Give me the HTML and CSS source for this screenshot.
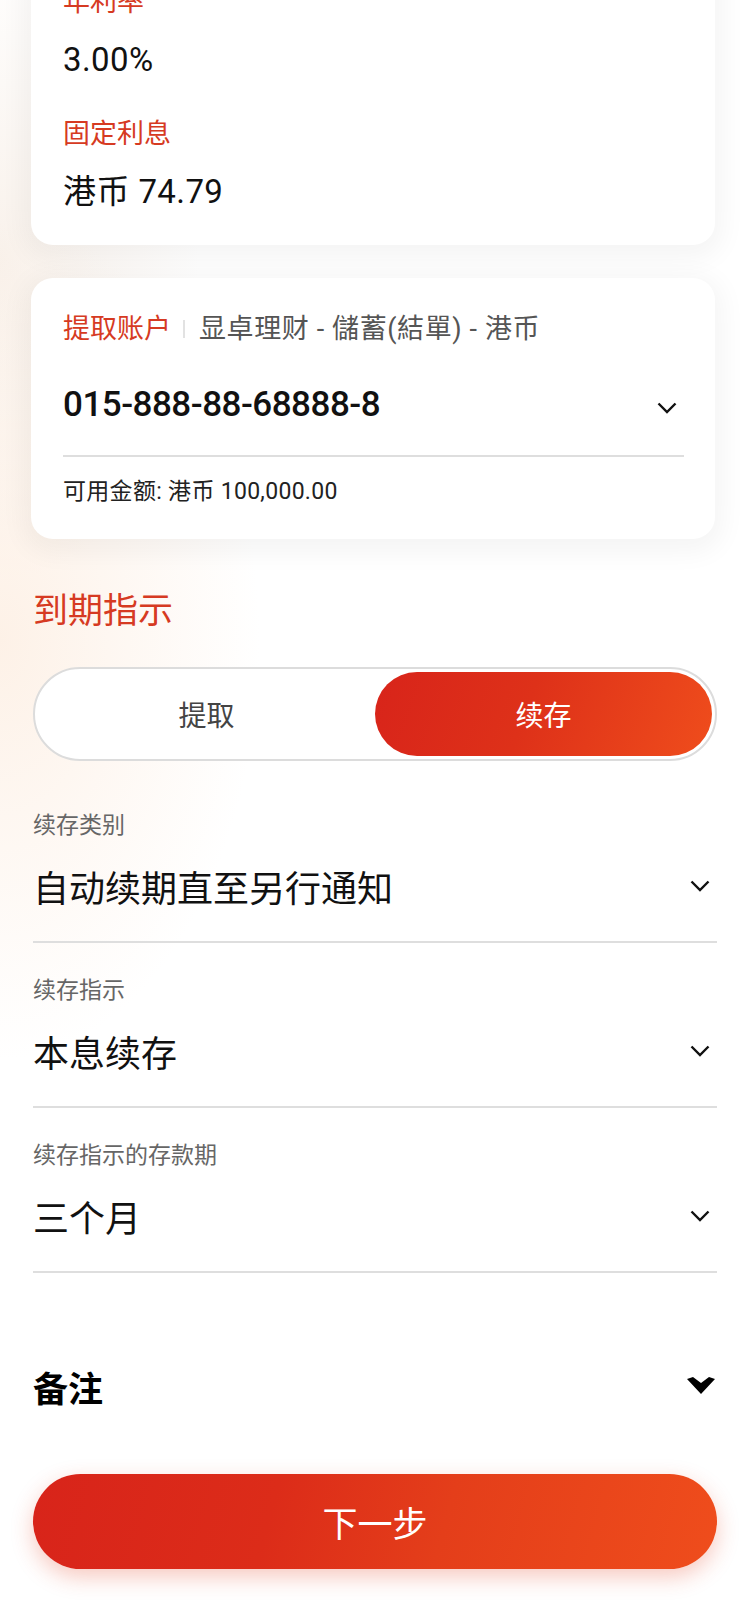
FILE: index.html
```html
<!DOCTYPE html>
<html lang="zh-CN">
<head>
    <meta charset="UTF-8">
    <title>定期存款</title>
    <link rel="stylesheet" href="styles.css">
</head>
<body>
<div class="page">
    <div class="card card-rate">
        <p class="card-label">年利率</p>
        <p class="card-value">3.00%</p>
        <p class="card-label">固定利息</p>
        <p class="card-value">港币 74.79</p>
    </div>

    <div class="card card-account">
        <p class="account-head">
            <span class="account-title">提取账户</span>
            <span class="account-sep"></span>
            <span class="account-name">显卓理财 - 儲蓄(結單) - 港币</span>
        </p>
        <div class="account-row">
            <span class="account-no">015-888-88-68888-8</span>
            <svg class="chev" width="20" height="12" viewBox="0 0 20 12"><polyline points="1.5,1.5 10,10 18.5,1.5" fill="none" stroke="#111" stroke-width="2.4"/></svg>
        </div>
        <p class="account-balance">可用金额: 港币 100,000.00</p>
    </div>

    <div class="form">
        <h2 class="section-title">到期指示</h2>
        <div class="toggle">
            <div class="toggle-item">提取</div>
            <div class="toggle-item active">续存</div>
        </div>

        <div class="field">
            <p class="field-label">续存类别</p>
            <div class="field-row">
                <span class="field-value">自动续期直至另行通知</span>
                <svg class="chev" width="20" height="12" viewBox="0 0 20 12"><polyline points="1.5,1.5 10,10 18.5,1.5" fill="none" stroke="#111" stroke-width="2.4"/></svg>
            </div>
        </div>
        <div class="field">
            <p class="field-label">续存指示</p>
            <div class="field-row">
                <span class="field-value">本息续存</span>
                <svg class="chev" width="20" height="12" viewBox="0 0 20 12"><polyline points="1.5,1.5 10,10 18.5,1.5" fill="none" stroke="#111" stroke-width="2.4"/></svg>
            </div>
        </div>
        <div class="field">
            <p class="field-label">续存指示的存款期</p>
            <div class="field-row">
                <span class="field-value">三个月</span>
                <svg class="chev" width="20" height="12" viewBox="0 0 20 12"><polyline points="1.5,1.5 10,10 18.5,1.5" fill="none" stroke="#111" stroke-width="2.4"/></svg>
            </div>
        </div>

        <div class="remark">
            <span class="remark-title">备注</span>
            <svg class="chev-bold" width="30" height="18" viewBox="0 0 30 18"><path d="M1 2 L7 0 L15 6 L23 0 L29 2 L15 17 Z" fill="#000"/></svg>
        </div>

        <button class="next">下一步</button>
    </div>
</div>
</body>
</html>
```

FILE: styles.css
```css
body{
    margin: 0px;
    background-color: #fff;
    font-family: Roboto, "Noto Sans CJK SC", sans-serif;
    color: #111;
}
p{
    margin: 0px;
}
.page{
    width: 750px;
    height: 1624px;
    overflow: hidden;
    background:
        radial-gradient(ellipse 260px 420px at 0px 640px, rgba(252, 232, 215, 0.6), rgba(255, 255, 255, 0)),
        radial-gradient(ellipse 200px 320px at 0px 260px, rgba(247, 238, 230, 0.8), rgba(255, 255, 255, 0)),
        #fff;
}
.card{
    margin: 0px 35px 0px 31px;
    background-color: #fff;
    border-radius: 22px;
    box-shadow: 0px 6px 26px 8px rgba(0, 0, 0, 0.045);
    position: relative;
}
.card-rate{
    margin-top: -60px;
    padding: 44px 32px 31px 32px;
}
.card-label{
    font-size: 27px;
    line-height: 36px;
    color: #d63a22;
}
.card-value{
    margin-top: 18px;
    font-size: 33px;
    line-height: 44px;
    color: #111;
    letter-spacing: 0.4px;
}
.card-value + .card-label{
    margin-top: 34px;
}
.card-account{
    margin-top: 33px;
    padding: 33px 31px 32px 32px;
}
.account-head{
    display: flex;
    align-items: center;
    font-size: 27px;
    line-height: 36px;
}
.account-title{
    color: #d63a22;
}
.account-sep{
    width: 2px;
    height: 18px;
    background-color: #e2e2e2;
    margin: 0px 14px 0px 12px;
}
.account-name{
    color: #555;
    letter-spacing: 0.6px;
}
.account-row{
    margin-top: 33px;
    display: flex;
    align-items: center;
    justify-content: space-between;
    height: 48px;
    padding-bottom: 27px;
    border-bottom: 2px solid #dedede;
}
.account-no{
    font-size: 35px;
    font-weight: 500;
    letter-spacing: -0.5px;
}
.chev{
    margin-right: 7px;
}
.account-row .chev{
    margin-top: 8px;
}
.account-balance{
    margin-top: 20px;
    font-size: 23px;
    line-height: 30px;
    color: #222;
    letter-spacing: 0.3px;
}
.form{
    padding: 0px 33px;
}
.section-title{
    margin: 50px 0px 0px 0px;
    font-size: 35px;
    line-height: 46px;
    font-weight: 400;
    color: #d63a22;
}
.toggle{
    margin-top: 32px;
    height: 84px;
    padding: 3px;
    border: 2px solid #dcdcdc;
    border-radius: 48px;
    background-color: #fff;
    display: flex;
    margin-bottom: 17px;
}
.toggle-item{
    flex: 1;
    display: flex;
    align-items: center;
    justify-content: center;
    font-size: 28px;
    color: #444;
    border-radius: 42px;
}
.toggle-item.active{
    color: #fff;
    background: linear-gradient(110deg, #d8241a 0%, #de3119 45%, #ef4d1c 100%);
}
.field{
    padding: 32px 0px 31px 0px;
    border-bottom: 2px solid #dedede;
}
.field-label{
    font-size: 23px;
    line-height: 32px;
    color: #666;
}
.field-row{
    margin-top: 20px;
    height: 48px;
    display: flex;
    align-items: center;
    justify-content: space-between;
}
.field-value{
    font-size: 36px;
    color: #111;
}
.remark{
    margin-top: 89px;
    height: 48px;
    display: flex;
    align-items: center;
    justify-content: space-between;
}
.remark-title{
    font-size: 35px;
    font-weight: 700;
    color: #000;
}
.chev-bold{
    margin-right: 1px;
}
.next{
    display: block;
    width: 100%;
    height: 95px;
    margin-top: 64px;
    border: none;
    border-radius: 48px;
    font-family: "Noto Sans CJK SC", sans-serif;
    font-size: 35px;
    color: #fff;
    background: linear-gradient(105deg, #d8241a 0%, #dc2c19 35%, #e43e1a 60%, #ef4d1c 100%);
    box-shadow: 0px 8px 22px rgba(225, 60, 30, 0.28);
}
```
